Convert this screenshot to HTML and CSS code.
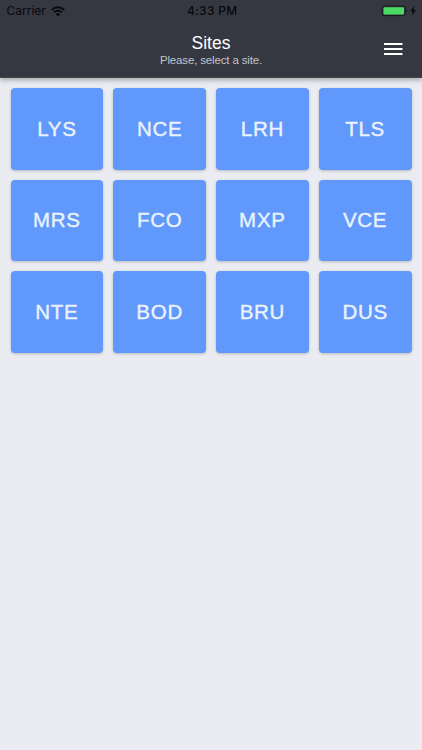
FILE: index.html
```html
<!DOCTYPE html>
<html lang="en">
<head>
<meta charset="utf-8">
<title>Sites</title>
<link rel="stylesheet" href="styles.css">
</head>
<body>
<header class="header">
  <div class="status">
    <div class="carrier"><span>Carrier</span>
      <svg width="14" height="11" viewBox="0 0 14 11" fill="none" stroke="#08090b" stroke-width="2"><path d="M.8 3.9a8.8 8.8 0 0 1 12.4 0M3.1 6.3a5.5 5.5 0 0 1 7.8 0"/><path d="M7 10.4 4.8 8.2a3.1 3.1 0 0 1 4.4 0Z" fill="#08090b" stroke="none"/></svg>
    </div>
    <div class="time">4:33 PM</div>
    <div class="battery">
      <svg width="36" height="12" viewBox="0 0 36 12"><rect x="1.2" y="1" width="23" height="9.6" rx="2" fill="none" stroke="#15171b"/><rect x="2.5" y="2.2" width="20.5" height="7.2" rx="1" fill="#4cd964"/><path d="M25.7 4v3.5q1.6-1.7 0-3.5Z" fill="#15171b"/><path d="M33.3 .8 29.4 6.3h2.3l-.8 4.5L35 5h-2.4Z" fill="#08090b"/></svg>
    </div>
  </div>
  <div class="navbar">
    <div class="heading"><h1>Sites</h1><p>Please, select a site.</p></div>
    <button class="menu" aria-label="Menu"><svg width="20" height="14" viewBox="0 0 20 14" fill="#fff"><path d="M1 1h18.5v2H1zM1 6h18.5v2H1zM1 11h18.5v2H1z"/></svg></button>
  </div>
</header>
<main class="sites">
  <button>LYS</button><button>NCE</button><button>LRH</button><button>TLS</button>
  <button>MRS</button><button>FCO</button><button>MXP</button><button>VCE</button>
  <button>NTE</button><button>BOD</button><button>BRU</button><button>DUS</button>
</main>
</body>
</html>
```
FILE: styles.css
```css
* { box-sizing: border-box; }
body { margin: 0; min-height: 750px; background: #ebecf1; font-family: "Liberation Sans", Arial, sans-serif; }
button { border: 0; padding: 0; font-family: inherit; }
.header { height: 78px; background: #363841; border-bottom: 1px solid #44464e; box-shadow: 0 2px 5px rgba(0,0,0,.3); }
.status { height: 22px; padding: 0 5px 0 6.5px; display: grid; grid-template-columns: 1fr auto 1fr; align-items: center; font-family: Inter, sans-serif; font-size: 12px; line-height: 14px; color: #08090b; }
.carrier { display: flex; align-items: center; gap: 5px; letter-spacing: 0; }
.time { padding-left: 1px; font-weight: 500; letter-spacing: .3px; }
.battery { display: flex; justify-content: flex-end; }
.navbar { height: 55px; display: grid; grid-template-columns: 1fr auto 1fr; align-items: center; }
.heading { grid-column: 2; text-align: center; color: #fff; }
h1 { margin: 0; font-size: 17.5px; line-height: 20px; font-weight: 400; }
p { margin: 0; font-size: 11.5px; line-height: 14px; letter-spacing: -.15px; color: #c3c3c6; }
.menu { justify-self: end; margin: 0 19px 2px 0; background: none; display: flex; }
.sites { padding: 10px 10.5px; display: grid; grid-template-columns: repeat(4, 1fr); grid-auto-rows: 81.5px; gap: 10px; }
.sites button { border-radius: 4px; background: #6198fb; color: #ebf2fb; font-size: 20.5px; letter-spacing: .7px; -webkit-text-stroke: .4px #ebf2fb; box-shadow: 0 1px 3px rgba(0,0,0,.22); }
```
